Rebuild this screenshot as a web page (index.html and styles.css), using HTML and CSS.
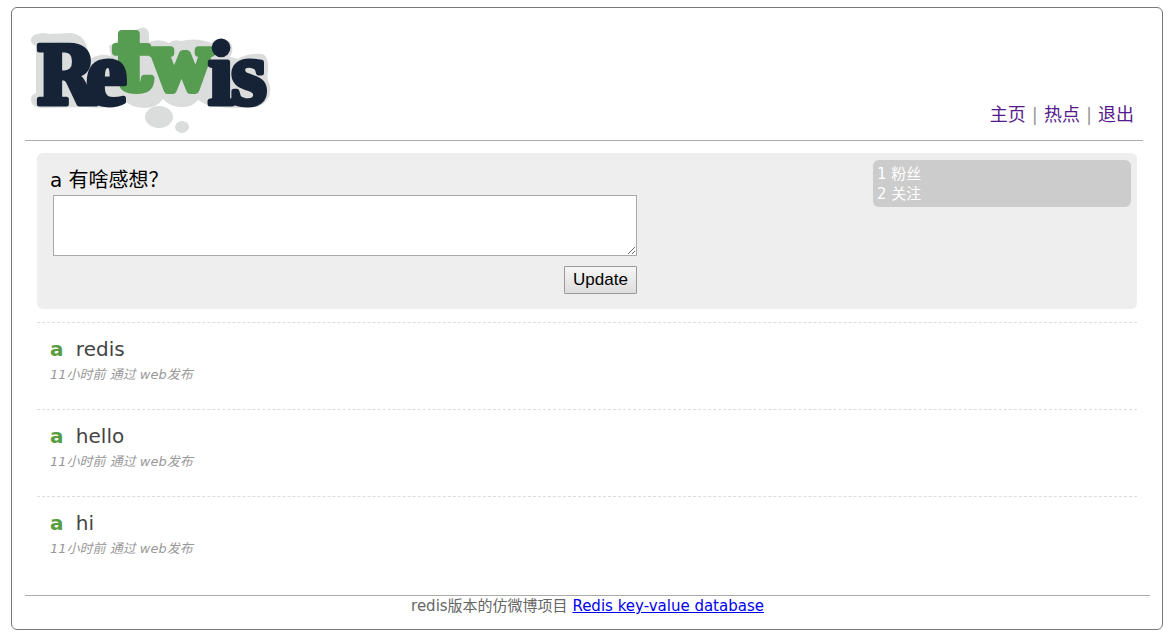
FILE: index.html
```html
<!DOCTYPE html>
<html lang="zh-CN">
<head>
<meta charset="utf-8">
<title>Retwis</title>
<link rel="stylesheet" href="styles.css">
</head>
<body>
<div class="page">
  <header class="header">
    <svg class="logo" width="244" height="112" viewBox="28 24 244 112" role="img" aria-label="Retwis">
      <g class="logo-shadow">
        <path d="M38 34Q43 32 49 34L71 33Q86 35 88 52Q89 58 87 61Q99 52 111 56L109 46L138 29Q148 24 149 35V42Q160 38 169 43Q174 39 181 41Q198 37 211 43Q220 35 230 42Q235 49 230 57L238 59Q247 53 261 54Q269 54 268 72Q266 77 270 86Q272 102 257 107Q224 110 205 104Q200 101 198 100Q192 108 180 107Q169 106 163 99Q157 108 144 108Q130 107 124 100Q110 110 87 107L40 108Q31 107 31 99Q31 95 36 93V46Q30 44 31 39Q33 34 38 34Z"/>
        <ellipse cx="159" cy="117" rx="14" ry="11"/>
        <ellipse cx="182" cy="127" rx="7" ry="6"/>
      </g>
      <g class="logo-green">
        <text class="letter-t" x="114" y="89">t</text>
        <text class="letter-w" x="151" y="89">w</text>
      </g>
      <g class="logo-navy">
        <text class="letter-r" x="36" y="104">R</text>
        <text class="letter-low" x="86" y="104">e</text>
        <text class="letter-low" x="208" y="104">i</text>
        <text class="letter-low" x="231" y="104">s</text>
      </g>
    </svg>
    <nav class="nav"><a href="#home">主页</a><span>|</span><a href="#hot">热点</a><span>|</span><a href="#logout">退出</a></nav>
  </header>
  <main class="main">
    <form class="composer">
      <div class="entry">
        <label for="status">a 有啥感想？</label>
        <textarea id="status" class="status" name="status"></textarea>
        <button class="update" type="button">Update</button>
      </div>
      <div class="stats">
        <div>1 粉丝</div>
        <div>2 关注</div>
      </div>
    </form>
    <article class="post">
      <p class="message"><a class="author" href="#a">a</a> redis</p>
      <p class="meta">11小时前 通过 web发布</p>
    </article>
    <article class="post">
      <p class="message"><a class="author" href="#a">a</a> hello</p>
      <p class="meta">11小时前 通过 web发布</p>
    </article>
    <article class="post">
      <p class="message"><a class="author" href="#a">a</a> hi</p>
      <p class="meta">11小时前 通过 web发布</p>
    </article>
  </main>
  <footer class="footer">redis版本的仿微博项目 <a href="#redis">Redis key-value database</a></footer>
</div>
</body>
</html>
```
FILE: styles.css
```css
* { box-sizing: border-box; }
body {
  margin: 7px 11px;
  background: #fff;
  color: #000;
  font-family: Verdana, "DejaVu Sans", "Noto Sans CJK SC", sans-serif;
}
.page {
  border: 1px solid #777;
  border-radius: 6px;
  padding: 16px 12px 12px 13px;
}
.header {
  display: flex;
  justify-content: space-between;
  align-items: flex-end;
  margin-right: 7px;
  height: 117px;
  border-bottom: 1px solid #aaa;
}
.logo { align-self: flex-start; margin-left: 3px; overflow: visible; }
.nav {
  display: flex;
  gap: 6px;
  padding: 0 9px 13px 0;
  font-size: 18px;
  line-height: 24px;
  color: #999;
}
.nav a { color: #551a8b; text-decoration: none; }
.logo text { font-weight: bold; stroke-linejoin: round; }
.logo-shadow { fill: #dadddc; }
.logo-green { fill: #579d51; stroke: #579d51; stroke-width: 8px; }
.logo-navy { fill: #162337; stroke: #162337; stroke-width: 5px; }
.letter-r { font-family: "Liberation Serif", serif; font-size: 88px; }
.letter-t { font-family: "DejaVu Serif", serif; font-size: 80px; }
.letter-w { font-family: "Liberation Serif", serif; font-size: 84px; }
.letter-low { font-family: "Liberation Serif", serif; font-size: 92px; }
.logo .letter-r { font-family: "DejaVu Serif Condensed", "DejaVu Serif", serif; font-size: 80px; }
.main { margin: 12px 13px 0 12px; }
.composer {
  display: flex;
  justify-content: space-between;
  align-items: flex-start;
  min-height: 156px;
  margin-bottom: 13px;
  padding: 7px 6px 15px 13px;
  border-radius: 6px;
  background: #eee;
}
.entry {
  display: flex;
  flex-direction: column;
  width: 587px;
  padding-top: 6px;
  font-size: 20px;
  line-height: 29px;
}
.status {
  height: 61px;
  margin-left: 3px;
  border: 1px solid #a9a9a9;
  border-radius: 0;
  background: #fff;
  font-family: inherit;
  font-size: 16px;
}
.update {
  align-self: flex-end;
  width: 73px;
  height: 28px;
  margin-top: 10px;
  padding: 0;
  border: 1px solid #999;
  border-radius: 1px;
  background: linear-gradient(#f6f6f6, #ddd);
  color: #000;
  font-family: "Liberation Sans", sans-serif;
  font-size: 17px;
}
.stats {
  width: 258px;
  padding: 4px 4px 3px;
  border-radius: 6px;
  background: #ccc;
  color: #fff;
  font-size: 15px;
  line-height: 20px;
}
.post {
  height: 87px;
  padding: 12px 13px;
  border-top: 1px dashed #ddd;
}
.message { margin: 0; color: #444; font-size: 20px; line-height: 28px; }
.author { margin-right: 6px; color: #579d41; font-weight: bold; text-decoration: none; }
.meta { margin: 0; color: #999; font-size: 13px; font-style: italic; line-height: 24px; }
.footer {
  margin-top: 12px;
  border-top: 1px solid #aaa;
  color: #666;
  font-size: 15px;
  line-height: 21px;
  text-align: center;
}
.footer a { color: #00e; }
```
